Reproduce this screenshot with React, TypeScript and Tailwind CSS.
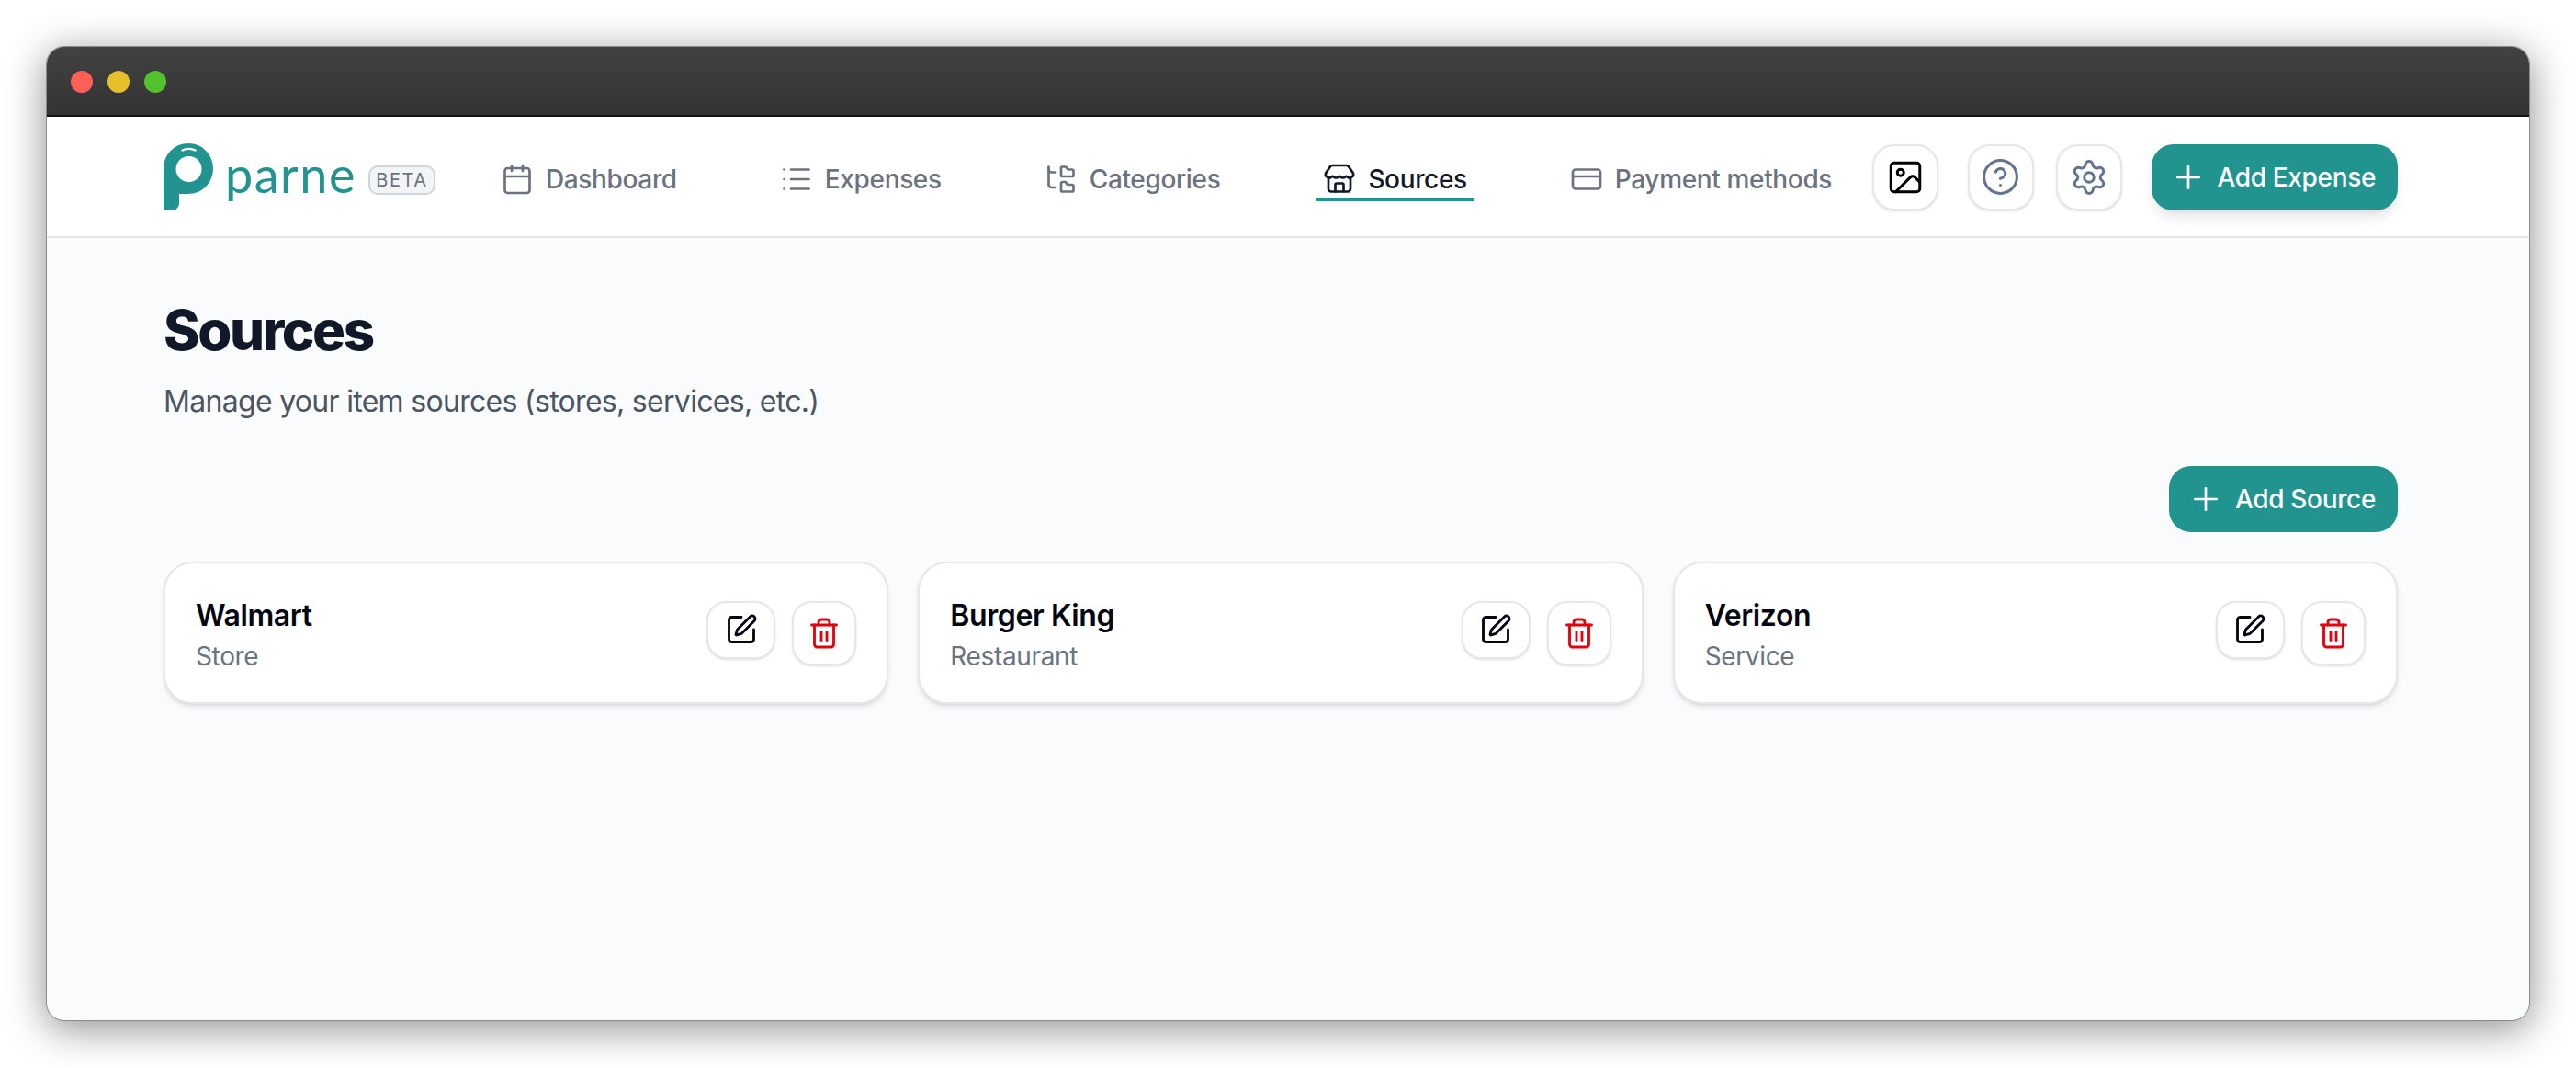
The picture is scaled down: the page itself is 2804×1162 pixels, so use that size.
import { Calendar, CircleHelp, CreditCard, FolderTree, Image, List, Plus, Settings, SquarePen, Store, Trash2 } from 'lucide-react';

const navItems = [
  { label: 'Dashboard', icon: Calendar },
  { label: 'Expenses', icon: List },
  { label: 'Categories', icon: FolderTree },
  { label: 'Sources', icon: Store, active: true },
  { label: 'Payment methods', icon: CreditCard },
];

const sources = [
  { name: 'Walmart', type: 'Store' },
  { name: 'Burger King', type: 'Restaurant' },
  { name: 'Verizon', type: 'Service' },
];

function Logo() {
  return (
    <div className="flex items-center">
      <svg width="54" height="73" viewBox="0 0 54 73" className="mt-[1px]">
        <path
          d="M0 27.500C0 12 12 0 27 0s27 12 27 27.500S42 55 27 55h-10v10c0 4.500-3.500 8-8 8H3c-2 0-3-1-3-3z"
          fill="#219490"
        />
        <circle cx="27.500" cy="28" r="14" fill="#fff" />
        <path d="M20.500 7.500c4-2 10-2 14 0" stroke="#fff" strokeWidth="2.500" fill="none" strokeLinecap="round" />
      </svg>
      <span className="ml-[13px] mt-[-4px] font-['Lato',sans-serif] text-[54px] leading-none tracking-[1.5px] text-[#219490]">
        parne
      </span>
      <span className="ml-[13px] mt-[8px] flex h-[32px] w-[73px] items-center justify-center rounded-[10px] border-2 border-[#d1d5db] bg-[#f3f4f6] text-[20px] tracking-[1.5px] text-[#6b7280]">
        BETA
      </span>
    </div>
  );
}

function Nav() {
  return (
    <header className="flex h-[132px] items-center border-b-2 border-[#e5e7eb] bg-white pl-[127px] pr-[143px]">
      <Logo />
      <nav className="ml-[64px] mt-[10px] flex gap-[97px]">
        {navItems.map((item) => (
          <a
            key={item.label}
            className={`flex h-[44px] items-center gap-[13px] border-b-4 pl-[7px] pr-[8px] text-[28px] font-medium ${
              item.active ? 'border-[#219490] text-[#111827]' : 'border-transparent text-[#6b7280]'
            }`}
          >
            <item.icon size={36} strokeWidth={1.8} />
            {item.label}
          </a>
        ))}
      </nav>
      <div className="ml-auto mt-[1px] flex items-center">
        <button className="flex h-[72px] w-[72px] items-center justify-center rounded-[24px] border-2 border-[#e5e7eb] bg-white text-black shadow-sm">
          <Image size={42} strokeWidth={1.7} />
        </button>
        <button className="ml-[32px] flex h-[72px] w-[72px] items-center justify-center rounded-[24px] border-2 border-[#e5e7eb] bg-white text-slate-500 shadow-sm">
          <CircleHelp size={43} strokeWidth={1.7} />
        </button>
        <button className="ml-[24px] flex h-[72px] w-[72px] items-center justify-center rounded-[24px] border-2 border-[#e5e7eb] bg-white text-slate-500 shadow-sm">
          <Settings size={42} strokeWidth={1.7} />
        </button>
        <button className="ml-[32px] flex h-[72px] items-center gap-[12px] rounded-[24px] bg-[#219490] pl-[20px] pr-[24px] text-[28px] font-medium text-white shadow-lg">
          <Plus size={40} strokeWidth={1.6} />
          Add Expense
        </button>
      </div>
    </header>
  );
}

function SourceCard({ name, type }: { name: string; type: string }) {
  return (
    <div className="flex items-center justify-between rounded-[32px] border-2 border-[#e5e7eb] bg-white py-[31px] pl-[33px] pr-[33px] shadow-md">
      <div>
        <div className="text-[32px] font-semibold leading-[52px] tracking-[-0.4px] text-[#030712]">{name}</div>
        <div className="mt-[-1px] text-[28px] leading-[38px] text-[#6b7280]">{type}</div>
      </div>
      <div className="flex items-start gap-[18px]">
        <button className="flex h-[63px] w-[75px] items-center justify-center rounded-[22px] border-2 border-[#e5e7eb] bg-white text-[#030712] shadow-sm">
          <SquarePen size={36} strokeWidth={1.9} />
        </button>
        <button className="flex h-[70px] w-[70px] items-center justify-center rounded-[22px] border-2 border-[#e5e7eb] bg-white text-red-600 shadow-sm">
          <Trash2 size={36} strokeWidth={1.9} />
        </button>
      </div>
    </div>
  );
}

export default function App() {
  return (
    <div className="h-[1162px] overflow-hidden bg-white pl-[50px] pt-[50px] font-['Inter',sans-serif] tracking-[-0.35px]">
      <div className="flex h-[1061px] w-[2704px] flex-col overflow-hidden rounded-[20px] border border-[#8a8a8a] bg-[#fafbfd] shadow-[0_8px_44px_rgba(0,0,0,0.45)]">
        <div className="flex h-[76px] items-center gap-[16px] border-b-2 border-[#141414] bg-gradient-to-b from-[#424242] to-[#333333] pl-[26px] pt-[2px]">
          <span className="h-[24px] w-[24px] rounded-full bg-[#ff5f57]" />
          <span className="h-[24px] w-[24px] rounded-full bg-[#e6bf29]" />
          <span className="h-[24px] w-[24px] rounded-full bg-[#52c22d]" />
        </div>
        <Nav />
        <main className="pl-[127px] pr-[143px] pt-[64px]">
          <h1 className="text-[60px] font-extrabold leading-[72px] tracking-[-2.4px] text-[#111827]">Sources</h1>
          <p className="mt-[18px] text-[32px] leading-[48px] tracking-[-0.7px] text-[#4b5563]">
            Manage your item sources (stores, services, etc.)
          </p>
          <div className="mt-[46px] flex justify-end">
            <button className="flex h-[72px] items-center gap-[12px] rounded-[24px] bg-[#219490] pl-[20px] pr-[24px] text-[28px] font-medium text-white">
              <Plus size={40} strokeWidth={1.6} />
              Add Source
            </button>
          </div>
          <div className="mt-[32px] grid grid-cols-3 gap-[32px]">
            {sources.map((s) => (
              <SourceCard key={s.name} name={s.name} type={s.type} />
            ))}
          </div>
        </main>
      </div>
    </div>
  );
}
